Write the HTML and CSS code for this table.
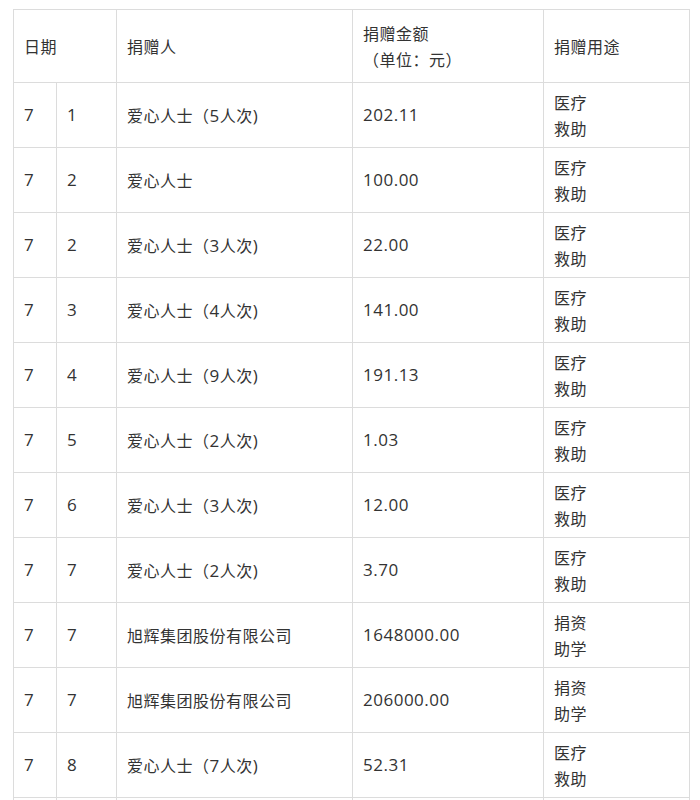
FILE: index.html
```html
<!DOCTYPE html>
<html lang="zh">
<head>
<meta charset="utf-8">
<link rel="stylesheet" href="styles.css">
</head>
<body>
<table class="donations">
  <colgroup>
    <col class="c-month"><col class="c-day"><col class="c-donor"><col class="c-amount"><col class="c-use">
  </colgroup>
  <thead>
    <tr>
      <th colspan="2">日期</th>
      <th>捐赠人</th>
      <th>捐赠金额<br>（单位：元）</th>
      <th>捐赠用途</th>
    </tr>
  </thead>
  <tbody>
    <tr><td class="num">7</td><td class="num">1</td><td>爱心人士（<span class="num">5</span>人次<span class="num">)</span></td><td class="num">202.11</td><td>医疗<br>救助</td></tr>
    <tr><td class="num">7</td><td class="num">2</td><td>爱心人士</td><td class="num">100.00</td><td>医疗<br>救助</td></tr>
    <tr><td class="num">7</td><td class="num">2</td><td>爱心人士（<span class="num">3</span>人次<span class="num">)</span></td><td class="num">22.00</td><td>医疗<br>救助</td></tr>
    <tr><td class="num">7</td><td class="num">3</td><td>爱心人士（<span class="num">4</span>人次<span class="num">)</span></td><td class="num">141.00</td><td>医疗<br>救助</td></tr>
    <tr><td class="num">7</td><td class="num">4</td><td>爱心人士（<span class="num">9</span>人次<span class="num">)</span></td><td class="num">191.13</td><td>医疗<br>救助</td></tr>
    <tr><td class="num">7</td><td class="num">5</td><td>爱心人士（<span class="num">2</span>人次<span class="num">)</span></td><td class="num">1.03</td><td>医疗<br>救助</td></tr>
    <tr><td class="num">7</td><td class="num">6</td><td>爱心人士（<span class="num">3</span>人次<span class="num">)</span></td><td class="num">12.00</td><td>医疗<br>救助</td></tr>
    <tr><td class="num">7</td><td class="num">7</td><td>爱心人士（<span class="num">2</span>人次<span class="num">)</span></td><td class="num">3.70</td><td>医疗<br>救助</td></tr>
    <tr><td class="num">7</td><td class="num">7</td><td>旭辉集团股份有限公司</td><td class="num">1648000.00</td><td>捐资<br>助学</td></tr>
    <tr><td class="num">7</td><td class="num">7</td><td>旭辉集团股份有限公司</td><td class="num">206000.00</td><td>捐资<br>助学</td></tr>
    <tr><td class="num">7</td><td class="num">8</td><td>爱心人士（<span class="num">7</span>人次<span class="num">)</span></td><td class="num">52.31</td><td>医疗<br>救助</td></tr>
    <tr class="next-row"><td></td><td></td><td></td><td></td><td></td></tr>
  </tbody>
</table>
</body>
</html>
```

FILE: styles.css
```css
html, body {
  margin: 0;
  padding: 0;
  background: #ffffff;
}

body {
  font-family: "Noto Sans CJK SC", "Noto Sans", sans-serif;
  font-size: 16px;
  letter-spacing: 0.5px;
  color: #333333;
}

.donations {
  margin: 9px 0 0 13px;
  width: 677px;
  table-layout: fixed;
  border-collapse: collapse;
}

.c-month { width: 43px; }
.c-day { width: 60px; }
.c-donor { width: 236px; }
.c-amount { width: 191px; }
.c-use { width: 146px; }

.donations th,
.donations td {
  border: 1px solid #dcdcdc;
  text-align: left;
  vertical-align: middle;
  font-weight: normal;
  line-height: 26px;
  padding: 6px 10px;
  white-space: nowrap;
}

.donations th {
  padding: 10px 10px;
}

.num {
  font-family: "Open Sans", "Noto Sans", sans-serif;
  font-size: 17px;
}

.next-row td {
  height: 52px;
}
```
